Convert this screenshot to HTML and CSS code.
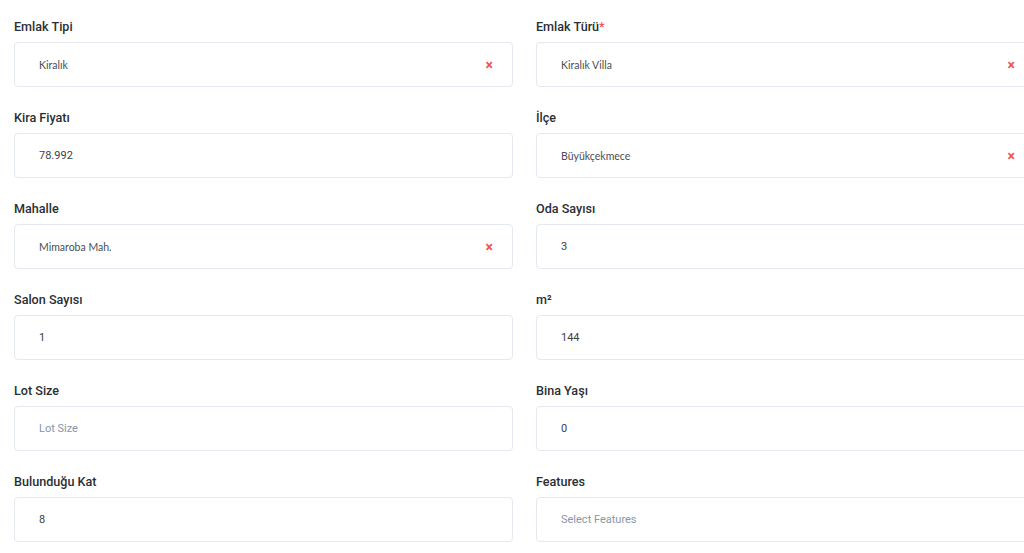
FILE: index.html
```html
<!DOCTYPE html>
<html lang="tr">
<head>
<meta charset="utf-8">
<title>Emlak Formu</title>
<link rel="stylesheet" href="styles.css">
</head>
<body>
<form class="form-grid">
  <div class="field">
    <label class="label">Emlak Tipi</label>
    <div class="box select">
      <span class="value sel-value">Kiralık</span>
      <span class="clear">×</span>
    </div>
  </div>
  <div class="field">
    <label class="label">Emlak Türü<span class="req">*</span></label>
    <div class="box select">
      <span class="value sel-value">Kiralık Villa</span>
      <span class="clear">×</span>
    </div>
  </div>

  <div class="field">
    <label class="label">Kira Fiyatı</label>
    <div class="box"><span class="value">78.992</span></div>
  </div>
  <div class="field">
    <label class="label">İlçe</label>
    <div class="box select">
      <span class="value sel-value">Büyükçekmece</span>
      <span class="clear">×</span>
    </div>
  </div>

  <div class="field">
    <label class="label">Mahalle</label>
    <div class="box select">
      <span class="value sel-value">Mimaroba Mah.</span>
      <span class="clear">×</span>
    </div>
  </div>
  <div class="field">
    <label class="label">Oda Sayısı</label>
    <div class="box"><span class="value">3</span></div>
  </div>

  <div class="field">
    <label class="label">Salon Sayısı</label>
    <div class="box"><span class="value">1</span></div>
  </div>
  <div class="field">
    <label class="label">m²</label>
    <div class="box"><span class="value">144</span></div>
  </div>

  <div class="field">
    <label class="label">Lot Size</label>
    <div class="box"><span class="value placeholder">Lot Size</span></div>
  </div>
  <div class="field">
    <label class="label">Bina Yaşı</label>
    <div class="box"><span class="value">0</span></div>
  </div>

  <div class="field">
    <label class="label">Bulunduğu Kat</label>
    <div class="box"><span class="value">8</span></div>
  </div>
  <div class="field">
    <label class="label">Features</label>
    <div class="box"><span class="value placeholder">Select Features</span></div>
  </div>
</form>
</body>
</html>
```
FILE: styles.css
```css
html, body {
  margin: 0;
  padding: 0;
  background: #ffffff;
  overflow: hidden;
}

body {
  font-family: Roboto, "Liberation Sans", sans-serif;
  color: #333;
}

.form-grid {
  display: grid;
  grid-template-columns: 499px 499px;
  column-gap: 23px;
  row-gap: 23px;
  padding: 19px 0 0 14px;
  width: 1050px;
}

.field {
  display: flex;
  flex-direction: column;
}

.label {
  font-size: 12.6px;
  font-weight: 500;
  line-height: 16px;
  color: #2b2f33;
  margin-bottom: 7px;
}

.req {
  color: #ef5350;
}

.box {
  box-sizing: border-box;
  height: 45px;
  border: 1px solid #e3e9ef;
  border-radius: 4px;
  display: flex;
  align-items: center;
  padding: 0 19px 0 24px;
}

.value {
  font-size: 11px;
  color: #3d4247;
  flex: 1;
}

.sel-value {
  font-family: Lato, "Open Sans", sans-serif;
  font-size: 10.5px;
  color: #4a4f55;
}

.placeholder {
  color: #8796a8;
}

.clear {
  color: #ef5350;
  font-size: 14px;
  font-weight: 700;
  line-height: 1;
}
```
